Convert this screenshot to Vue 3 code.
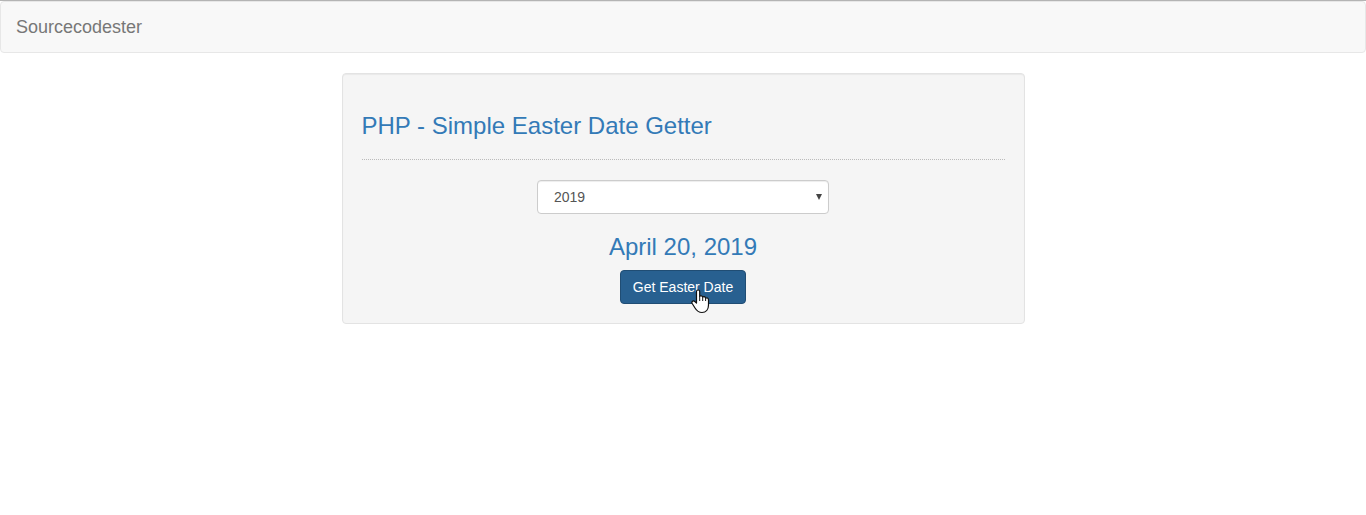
<script setup>
import { ref } from 'vue'

const years = Array.from({ length: 11 }, (_, i) => 2014 + i)
const year = ref(2019)
const easterDate = ref('April 20, 2019')

function getEasterDate() {
  const y = year.value
  const a = y % 19
  const b = Math.floor(y / 100)
  const c = y % 100
  const h = (19 * a + b - Math.floor(b / 4) - Math.floor((b - Math.floor((b + 8) / 25) + 1) / 3) + 15) % 30
  const l = (32 + 2 * (b % 4) + 2 * Math.floor(c / 4) - h - (c % 4)) % 7
  const m = Math.floor((a + 11 * h + 22 * l) / 451)
  const n = h + l - 7 * m + 114
  const month = Math.floor(n / 31) === 3 ? 'March' : 'April'
  easterDate.value = `${month} ${(n % 31) + 1}, ${y}`
}
</script>

<template>
  <div class="page">
    <nav class="navbar">
      <a class="brand" href="#">Sourcecodester</a>
    </nav>
    <main class="well">
      <h3 class="heading">PHP - Simple Easter Date Getter</h3>
      <hr class="rule" />
      <form class="form" @submit.prevent="getEasterDate">
        <div class="select-box">
          <select v-model="year" class="year" aria-label="Year">
            <option v-for="y in years" :key="y" :value="y">{{ y }}</option>
          </select>
          <svg class="arrow" width="6" height="6" viewBox="0 0 6 6" aria-hidden="true">
            <path d="M0 0h6L3 6z" fill="#444" />
          </svg>
        </div>
        <h3 class="heading">{{ easterDate }}</h3>
        <div class="action">
          <button class="btn" type="submit">Get Easter Date</button>
          <svg class="pointer" width="19" height="25" viewBox="0 0 19 25" aria-hidden="true">
            <path
              d="M5.500 14V2.500C5.500 .5 8.700 .5 8.700 2.500V7.500C9.500 6.200 11.500 6.700 11.700 8.200C12.500 7 14.400 7.500 14.600 9.200C15.700 8.300 17.500 9 17.500 11V16C17.500 20.500 15 23.500 11 23.500C7.500 23.500 5.500 21.500 4 19L1.200 14.500C.2 12.700 2.200 11 3.800 12.500Z"
              fill="#fff"
              stroke="#111"
              stroke-width="1.200"
              stroke-linejoin="round"
            />
            <path d="M8.700 7.500V12M11.700 8.200V12M14.600 9.200V12" fill="none" stroke="#111" />
          </svg>
        </div>
      </form>
    </main>
  </div>
</template>

<style>
body {
  margin: 0;
  background: #fff;
}
</style>

<style scoped>
.page,
.page * {
  box-sizing: border-box;
}

.page {
  border-top: 1px solid #b4b4b4;
  font: 14px/20px "Liberation Sans", Arial, sans-serif;
  color: #333;
}

.navbar {
  padding: 0 15px;
  border: 1px solid #e7e7e7;
  border-radius: 4px;
  background: #f8f8f8;
}

.brand {
  display: inline-block;
  padding: 15px 0;
  vertical-align: top;
  color: #777;
  font-size: 18px;
  line-height: 20px;
  text-decoration: none;
}

.well {
  width: 50%;
  margin: 20px auto;
  padding: 19px;
  border: 1px solid #e3e3e3;
  border-radius: 4px;
  background: #f5f5f5;
  box-shadow: inset 0 1px 1px rgba(0, 0, 0, 0.05);
}

.heading {
  margin: 20px 0 10px;
  color: #337ab7;
  font-size: 24px;
  font-weight: 500;
  line-height: 26px;
}

.rule {
  margin: 20px 0;
  border: 0;
  border-top: 1px dotted #bbb;
}

.form {
  display: flex;
  flex-direction: column;
  align-items: center;
}

.select-box {
  position: relative;
  width: 292px;
  max-width: 100%;
}

.year {
  display: block;
  width: 100%;
  height: 34px;
  margin: 0;
  padding: 6px 16px;
  appearance: none;
  border: 1px solid #ccc;
  border-radius: 4px;
  background: #fff;
  box-shadow: inset 0 1px 1px rgba(0, 0, 0, 0.075);
  color: #555;
  font: inherit;
}

.arrow {
  position: absolute;
  top: 14px;
  right: 7px;
}

.action {
  position: relative;
}

.btn {
  display: block;
  margin: 0;
  padding: 6px 12px;
  border: 1px solid #204d74;
  border-radius: 4px;
  background: #286090;
  color: #fff;
  font: inherit;
  cursor: pointer;
}

.pointer {
  position: absolute;
  top: 19px;
  left: 71px;
  pointer-events: none;
}
</style>
